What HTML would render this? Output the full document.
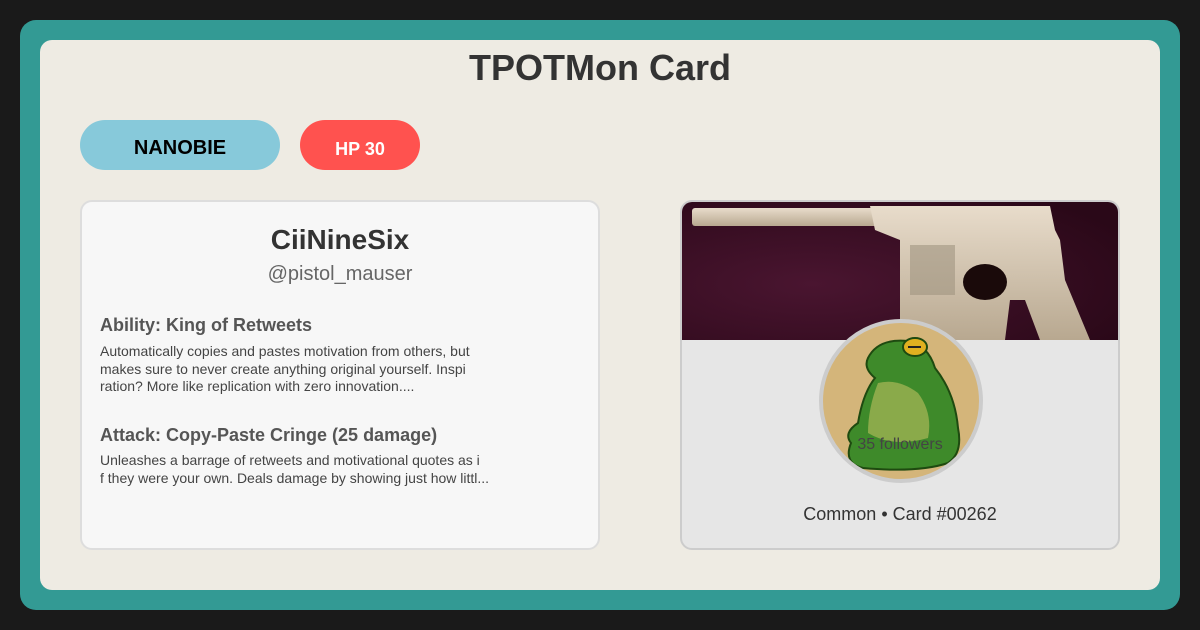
<!DOCTYPE html>
<html><head><style>
*{margin:0;padding:0;box-sizing:border-box}
body{width:1200px;height:630px;background:#1a1a1a;font-family:"Liberation Sans",sans-serif;position:relative;overflow:hidden}
.frame{position:absolute;left:20px;top:20px;width:1160px;height:590px;background:#339a94;border-radius:16px}
.inner{position:absolute;left:40px;top:40px;width:1120px;height:550px;background:#eeebe3;border-radius:12px}
.abs{position:absolute}
h1{position:absolute;left:0;width:1200px;top:47px;text-align:center;font-size:36px;color:#333;font-weight:bold}
.pill{position:absolute;top:120px;height:50px;border-radius:25px;text-align:center;font-weight:bold}
.left{position:absolute;left:80px;top:200px;width:520px;height:350px;background:#f7f7f7;border:2px solid #ddd;border-radius:12px}
.right{position:absolute;left:680px;top:200px;width:440px;height:350px;background:#e6e6e6;border:2px solid #ccc;border-radius:12px;overflow:hidden}
.h{position:absolute;left:18px;font-size:18px;font-weight:bold;color:#555}
.p{position:absolute;left:18px;font-size:14px;color:#444;line-height:17.5px;width:400px}
</style></head><body>
<div class="frame"></div><div class="inner"></div>
<h1>TPOTMon Card</h1>
<div class="pill" style="left:80px;width:200px;background:#87c9da;color:#000;font-size:20px;line-height:56px">NANOBIE</div>
<div class="pill" style="left:300px;width:120px;background:#ff524f;color:#fff;font-size:18px;line-height:58px">HP 30</div>
<div class="left">
<div class="abs" style="left:0;width:516px;top:22px;text-align:center;font-size:28px;font-weight:bold;color:#333">CiiNineSix</div>
<div class="abs" style="left:0;width:516px;top:61px;text-align:center;font-size:20px;color:#666">@pistol_mauser</div>
<div class="h" style="top:113px">Ability: King of Retweets</div>
<div class="p" style="top:141px">Automatically copies and pastes motivation from others, but<br>makes sure to never create anything original yourself. Inspi<br>ration? More like replication with zero innovation....</div>
<div class="h" style="top:223px">Attack: Copy-Paste Cringe (25 damage)</div>
<div class="p" style="top:250px">Unleashes a barrage of retweets and motivational quotes as i<br>f they were your own. Deals damage by showing just how littl...</div>
</div>
<div class="right">
<svg class="abs" style="left:-2px;top:-2px" width="440" height="140" viewBox="0 0 440 140">
<defs><radialGradient id="v" cx="30%" cy="60%" r="80%"><stop offset="0" stop-color="#4a1530"/><stop offset="1" stop-color="#2a0818"/></radialGradient>
<linearGradient id="s" x1="0" y1="0" x2="0" y2="1"><stop offset="0" stop-color="#e8dccb"/><stop offset="1" stop-color="#b8a890"/></linearGradient></defs>
<rect width="440" height="140" fill="url(#v)"/>
<rect x="12" y="8" width="190" height="18" rx="3" fill="url(#s)"/>
<path d="M190 6 L370 6 L375 30 L380 40 L385 80 L410 140 L360 140 L345 100 L330 100 L325 140 L220 140 L220 40 L195 30 Z" fill="url(#s)"/>
<ellipse cx="305" cy="82" rx="22" ry="18" fill="#1a0a0a"/>
<rect x="230" y="45" width="45" height="50" fill="#a09580" opacity=".6"/>
</svg>
<div class="abs" style="left:137px;top:117px;width:164px;height:164px;border-radius:50%;background:#d4b57a;border:4px solid #ccc;overflow:hidden">
<svg width="156" height="156" viewBox="0 0 156 156">
<path d="M45 35 Q55 15 85 18 Q105 22 112 45 Q132 70 135 105 Q140 130 125 140 Q95 150 40 145 Q20 140 28 120 Q20 110 35 100 Q40 70 52 55 Q40 45 45 35Z" fill="#3e8a2a" stroke="#1e4a10" stroke-width="2"/>
<path d="M55 60 Q45 85 45 110 Q70 125 105 115 Q110 90 95 70 Q75 55 55 60Z" fill="#8aaa4a"/>
<ellipse cx="92" cy="24" rx="12" ry="9" fill="#e0b020" stroke="#1e4a10" stroke-width="2"/>
<line x1="85" y1="24" x2="98" y2="24" stroke="#222" stroke-width="2"/>
</svg></div>
<div class="abs" style="left:0;width:436px;top:234px;text-align:center;font-size:16px;color:#444">35 followers</div>
<div class="abs" style="left:0;width:436px;top:302px;text-align:center;font-size:18px;color:#333">Common • Card #00262</div>
</div>
</body></html>
